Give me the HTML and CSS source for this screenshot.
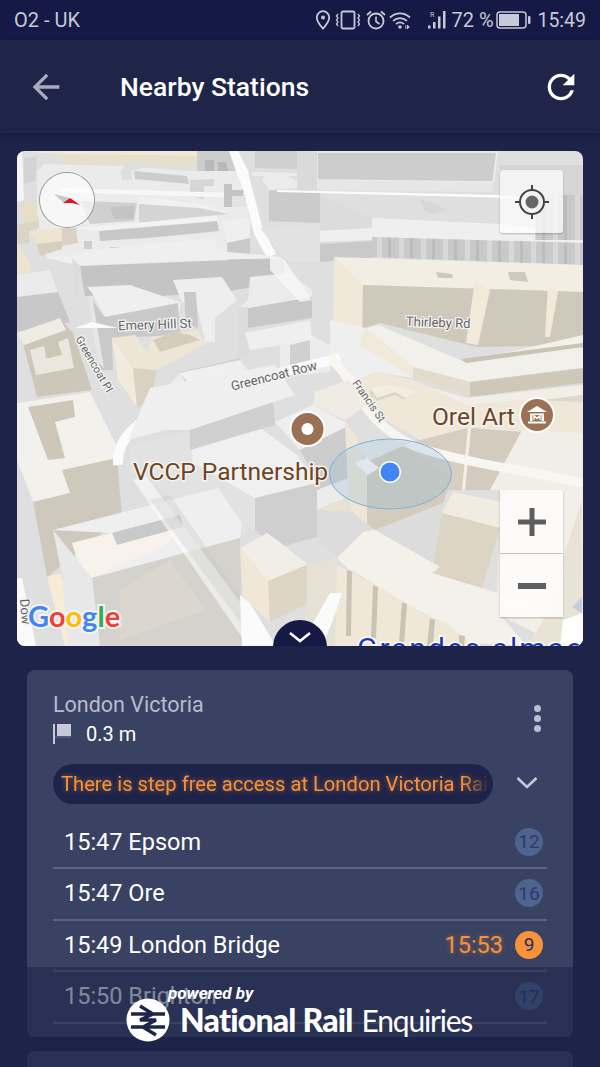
FILE: index.html
```html
<!DOCTYPE html>
<html lang="en">
<head>
    <meta charset="UTF-8">
    <meta name="viewport" content="width=device-width, initial-scale=1.0">
    <title>Nearby Stations</title>
    <link rel="stylesheet" href="styles.css">
</head>
<body>
    <div class="status-bar">
        <span class="carrier">O2 - UK</span>
        <div class="status-icons">
            <svg class="ico-pin" viewBox="0 0 16 20" width="16" height="20"><path d="M8 1.200a6.200 6.200 0 0 0-6.200 6.200C1.800 11.500 8 18.600 8 18.600s6.200-7.100 6.200-11.200A6.200 6.200 0 0 0 8 1.200z" fill="none" stroke="currentColor" stroke-width="1.800"/><circle cx="8" cy="7.400" r="2" fill="currentColor"/></svg>
            <svg class="ico-vibrate" viewBox="0 0 26 20" width="26" height="20"><rect x="6.500" y="1.500" width="13" height="17" rx="1.500" fill="none" stroke="currentColor" stroke-width="1.800"/><path d="M3 4l-1.500 2 1.500 2-1.500 2 1.500 2-1.500 2 1.500 2M23 4l1.500 2-1.500 2 1.500 2-1.500 2 1.500 2-1.500 2" fill="none" stroke="currentColor" stroke-width="1.300"/></svg>
            <svg class="ico-alarm" viewBox="0 0 20 20" width="20" height="20"><circle cx="10" cy="11" r="7.500" fill="none" stroke="currentColor" stroke-width="1.800"/><path d="M10 6.500V11.500L13.500 14" fill="none" stroke="currentColor" stroke-width="1.600"/><path d="M1 5l4-3.500M19 5l-4-3.500" fill="none" stroke="currentColor" stroke-width="1.800"/></svg>
            <svg class="ico-wifi" viewBox="0 0 24 20" width="24" height="20"><path d="M1 7.500c6-5.500 14-5.500 20 0M4 10.800c4.200-3.700 9.800-3.700 14 0M7 14c2.500-2 5.500-2 8 0" fill="none" stroke="currentColor" stroke-width="1.700"/><circle cx="11" cy="17" r="1.800" fill="currentColor"/><path d="M18 15v4l2.500-2zM16.500 15v4" fill="currentColor" stroke="currentColor" stroke-width=".6"/></svg>
            <svg class="ico-signal" viewBox="0 0 20 22" width="20" height="22"><path d="M1 16.500h2.500v3H1zM6 13h2.500v6.500H6zM11 7.500h2.500v12H11zM16 2h2.500v17.500H16z" fill="currentColor"/><text x="3" y="7.500" class="roam">R</text></svg>
            <span class="batt-pct">72 %</span>
            <svg class="ico-batt" viewBox="0 0 35 18" width="35" height="18"><rect x="1" y="1" width="29" height="16" rx="3" fill="none" stroke="currentColor" stroke-width="1.500"/><rect x="3" y="3" width="20" height="12" fill="currentColor"/><rect x="32" y="5" width="2.500" height="8" rx="1" fill="currentColor"/></svg>
            <span class="clock">15:49</span>
        </div>
    </div>

    <header class="app-bar">
        <svg class="back" viewBox="0 0 24 24" width="40" height="40"><path d="M20 11H7.830l5.590-5.590L12 4l-8 8 8 8 1.410-1.410L7.830 13H20v-2z"/></svg>
        <h1 class="title">Nearby Stations</h1>
        <svg class="refresh" viewBox="0 0 24 24" width="40" height="40"><path d="M17.650 6.350A7.958 7.958 0 0 0 12 4c-4.420 0-7.990 3.580-7.990 8s3.570 8 7.990 8c3.730 0 6.840-2.550 7.730-6h-2.080A5.990 5.990 0 0 1 12 18c-3.310 0-6-2.690-6-6s2.690-6 6-6c1.660 0 3.140.69 4.220 1.780L13 11h7V4l-2.350 2.350z"/></svg>
    </header>

    <section class="map">
        <svg class="map-art" viewBox="17 151 566 495" width="566" height="495">
            <defs>
                <pattern id="bars" width="22" height="10" patternUnits="userSpaceOnUse">
                    <rect width="22" height="10" fill="#c9c9c9"/>
                    <rect x="3" width="5" height="10" fill="#d8d8d8"/>
                    <rect x="14" width="3" height="10" fill="#bcbcbc"/>
                </pattern>
            </defs>
            <rect x="17" y="151" width="566" height="495" fill="#dfdfe0"/>

            <!-- top strip -->
            <polygon points="17,151 197,151 197,156 60,154" fill="#f0e8d2"/>
            <polygon points="60,154 197,156 197,168 140,164 89,166 62,163" fill="#e6dfcc"/>
            <polygon points="17,151 22,151 24,200 17,202" fill="#f5f5f5"/>
            <polygon points="24,158 37,156 35,181 24,184" fill="#d4d4d4"/>
            <polygon points="197,151 230,151 237,171 197,171" fill="#cdcdcd"/>
            <polygon points="205,160 214,160 214,171 205,171" fill="#b9b9b9"/>
            <polygon points="218,162 226,162 228,171 218,171" fill="#b9b9b9"/>

            <!-- top left blocks -->
            <polygon points="37,171 44,164 120,166 190,171 237,171 247,194 250,231 240,270 80,266 47,258 37,230" fill="#ebebeb"/>
            <polygon points="120,172 128,161 142,163 142,168 132,171 132,180 122,180" fill="#dedede"/>
            <polygon points="134,171 187,176 189,184 135,179" fill="#cdcdcd"/>
            <polygon points="190,180 214,179 214,186 204,186 204,199 190,196" fill="#d6d6d6"/>
            <polygon points="60,188 238,193 238,198 60,192" fill="#f7f7f7"/>
            <polygon points="80,201 137,203 134,221 90,224" fill="#d0d0d0"/>
            <polygon points="110,207 134,206 134,219 114,219" fill="#c4c4c4"/>
            <polygon points="137,201 142,197 199,204 230,212 215,216 139,204" fill="#f1f1f1"/>
            <polygon points="139,204 199,208 230,214 184,218 139,223" fill="#d4d4d4"/>
            <polygon points="224,184 232,184 232,207 224,207" fill="#c4c4c4"/>
            <polygon points="232,190 246,190 246,207 232,207" fill="#e3e3e3"/>
            <polygon points="232,190 243,190 243,196 232,196" fill="#c4c4c4"/>
            <polygon points="76,228 217,216 219,222 99,231" fill="#f3f3f3"/>
            <polygon points="99,231 217,221 219,231 190,234 147,238 100,241" fill="#c8c8c8"/>
            <polygon points="84,241 92,241 92,249 84,249" fill="#cdcdcd"/>
            <polygon points="110,247 120,247 120,255 110,255" fill="#cdcdcd"/>
            <polygon points="142,248 152,248 152,253 142,253" fill="#cdcdcd"/>
            <polygon points="187,247 196,247 196,250 187,250" fill="#c4c4c4"/>
            <polygon points="222,221 250,218 250,238 228,243" fill="#efefef"/>
            <polygon points="227,243 250,238 250,244 250,262 228,264" fill="#cacaca"/>

            <!-- road top -->
            <polygon points="229,151 238,151 248,171 251,184 262,226 276,254 267,258 254,234 244,191 236,171" fill="#fbfbfb"/>

            <!-- top right gray -->
            <polygon points="255,151 297,151 297,169 255,168" fill="#cfcfcf"/>
            <polygon points="252,172 297,173 297,176 252,176" fill="#ececec"/>
            <polygon points="317,152 497,152 493,182 317,180" fill="#cdcdcd" stroke="#efefef" stroke-width="1.500"/>
            <polygon points="317,180 493,182 493,192 317,190" fill="#e6e6e6"/>
            <polygon points="297,152 317,152 317,190 297,192" fill="#dadada"/>
            <polygon points="262,179 267,174 284,174 297,181 297,188 269,190" fill="#ececec"/>
            <polygon points="269,190 320,193 320,223 269,221" fill="#cbcbcb"/>
            <polygon points="277,192 583,200 583,197 277,190" fill="#fbfbfb"/>
            <polygon points="420,200 432,202 446,210 432,214 426,212" fill="#d7d7d7"/>
            <polygon points="500,165 583,165 583,200 500,196" fill="#d5d5d5"/>
            <polygon points="372,218 500,224 580,232 583,243 372,237" fill="#efefef"/>
            <polygon points="372,237 583,243 583,265 372,257" fill="url(#bars)"/>
            <polygon points="320,196 372,218 372,258 320,258" fill="#dcdcdc"/>
            <polygon points="300,232 372,228 372,240 318,242" fill="#efefef"/>
            <polygon points="310,245 372,241 372,258 318,262" fill="#c9c9c9"/>
            <polygon points="260,228 320,224 320,262 288,262" fill="#e2e2e2"/>
            <polygon points="535,195 583,195 583,240 535,240" fill="url(#bars)"/>

            <!-- left tan -->
            <polygon points="17,204 34,201 39,221 25,223" fill="#e7ddc8"/>
            <polygon points="25,223 39,221 39,228 29,231 29,243 17,244 17,225" fill="#dcd4c2"/>
            <polygon points="29,231 62,228 62,241 37,244" fill="#ede4d2"/>
            <polygon points="37,244 62,241 62,249 40,256" fill="#d7cfbd"/>
            <polygon points="17,244 30,261 32,271 17,275" fill="#ece3d0"/>
            <polygon points="62,228 76,228 78,243 62,246" fill="#d9d2c2"/>
            <polygon points="17,275 50,270 58,292 17,298" fill="#ebebeb"/>
            <polygon points="17,297 58,292 70,322 17,332" fill="#c8c8c8"/>
            <polygon points="17,333 60,318 73,333 92,390 37,397 23,343" fill="#cdc7b9"/>
            <polygon points="17,333 60,318 66,330 24,345" fill="#efece5"/>
            <polygon points="30,350 44,346 48,358 62,355 58,342 68,338 74,368 36,375" fill="#ebe7df"/>
            <polygon points="44,345 50,345 52,358 46,358" fill="#cdc7b9"/>
            <polygon points="17,403 90,392 117,447 122,460 70,493 33,502 17,460" fill="#f3f1ec"/>
            <polygon points="28,407 73,400 75,417 55,422 65,458 48,460 33,420" fill="#cdc7ba"/>
            <polygon points="33,502 70,493 62,470 117,458 122,517 47,577" fill="#cfc9bd"/>
            <polygon points="17,460 33,502 47,577 70,646 34,646 17,580" fill="#dfdfe0"/>
            <polygon points="47,577 60,573 85,646 65,646" fill="#f7ecd5"/>
            <polygon points="17,578 22,578 36,646 17,646" fill="#fafafa"/>

            <!-- long block middle -->
            <polygon points="47,258 72,256 84,251 150,244 214,238 217,251 274,256 284,258 164,261 80,266" fill="#efefef"/>
            <polygon points="80,266 284,258 284,281 225,292 160,296 148,294 85,296" fill="#c4c4c4"/>
            <polygon points="72,258 80,266 80,300 75,296" fill="#dcdcdc"/>
            <polygon points="87,287 130,285 180,302 180,310 105,318 92,293" fill="#efefef"/>
            <polygon points="105,317 178,303 180,335 112,338 113,370 100,370 92,300" fill="#c9c9c9"/>
            <polygon points="88,296 92,296 104,368 98,362" fill="#e6e6e6"/>
            <polygon points="173,280 222,277 237,300 215,318 215,342 205,342 198,310 182,302" fill="#eeeeee"/>
            <polygon points="184,292 196,292 198,328 186,325" fill="#c9c9c9"/>
            <polygon points="250,277 290,273 312,290 312,302 237,310 248,300" fill="#ececec"/>
            <polygon points="237,310 312,297 312,318 248,328 237,332" fill="#c8c8c8"/>
            <polygon points="237,308 248,307 248,360 237,356" fill="#dcdcdc"/>
            <polygon points="270,258 283,258 312,300 300,302 270,270" fill="#f7f7f7" opacity=".8"/>
            <polygon points="75,328 118,328 92,322" fill="#fbfbfb"/>

            <!-- Emery building -->
            <polygon points="112,338 135,335 147,352 153,337 197,330 207,343 157,370 150,403 137,407 133,368" fill="#ede6d6"/>
            <polygon points="112,338 133,368 137,407 118,380" fill="#f1ebdc"/>
            <polygon points="133,368 157,370 150,403 137,407" fill="#d9d2c2"/>
            <polygon points="153,340 175,332 190,335 200,340 160,352" fill="#d5cdbb"/>

            <!-- central low blocks -->
            <polygon points="180,373 240,360 273,403 190,430 160,395" fill="#ececec"/>
            <polygon points="180,372 240,358 240,375 190,392" fill="#d2d2d2"/>
            <polygon points="180,373 240,360 243,372 190,385" fill="#f0f0f0"/>
            <polygon points="190,430 273,403 273,422 210,442 190,445" fill="#d2d2d2"/>
            <polygon points="280,345 310,335 330,345 330,372 305,375 280,372" fill="#ececec"/>
            <polygon points="290,345 310,340 310,362 290,365" fill="#d0d0d0"/>
            <polygon points="245,333 310,320 312,340 250,350" fill="#efefef"/>

            <!-- right tan mega block -->
            <polygon points="334,257 583,265 583,292 363,285" fill="#f2eee4"/>
            <polygon points="334,257 363,285 362,360 333,320" fill="#f0e8d8"/>
            <polygon points="363,285 583,292 583,345 477,347 380,323 365,328 362,360" fill="#cfc9bb"/>
            <polygon points="475,280 490,290 478,345 466,343" fill="#f1ead9"/>
            <polygon points="548,285 558,292 550,337 545,337" fill="#f1ead9"/>
            <polygon points="436,272 452,274 453,278 438,278" fill="#cfc9bb"/>
            <polygon points="508,272 525,272 528,282 510,280" fill="#cfc9bb"/>

            <polygon points="330,320 365,328 413,378 375,372 345,385 330,357" fill="#efefef"/>
            <polygon points="378,325 465,362 583,335 583,368 470,382 413,367 365,328" fill="#f2f0eb"/>
            <polygon points="461,359 583,343 583,347 466,363" fill="#c9c3b4"/>
            <polygon points="365,328 413,367 413,377 360,345" fill="#f1e9da"/>
            <polygon points="413,367 470,382 470,397 413,377" fill="#e2dccf"/>
            <polygon points="470,382 583,368 583,383 470,397" fill="#cec8b9"/>
            <polygon points="405,380 467,398 583,385 583,395 467,410 410,392" fill="#f1eee7"/>
            <polygon points="467,410 583,395 583,402 470,416" fill="#ded8ca"/>
            <polygon points="375,372 413,380 467,405 520,400 583,402 583,435 468,428 420,440 385,420 345,385" fill="#efe8d9"/>
            <polygon points="522,430 583,433 583,490 487,490" fill="#f1eee7"/>
            <polygon points="370,388 393,385 415,392 405,398 395,392 377,398" fill="#f3eee2"/>
            <polygon points="370,388 377,398 377,401 370,395" fill="#ddd6c6"/>
            <polygon points="377,398 395,392 395,395 377,401" fill="#ddd6c6"/>
            <polygon points="395,392 405,398 405,400 395,395" fill="#ddd6c6"/>

            <!-- dark tan walls right of the dot -->
            <polygon points="412,442 468,428 462,490 400,490 375,470" fill="#d6cfc1"/>
            <polygon points="471,428 520,432 522,430 490,490 465,490" fill="#d3ccbe"/>
            <polygon points="468,428 471,428 465,490 462,490" fill="#f5efe3"/>

            <!-- curved road -->
            <path d="M118 465C116 430 150 410 230 387S300 368 340 358" fill="none" stroke="#fbfbfb" stroke-width="10"/>
            <path d="M330 357L350 380C360 400 370 415 380 423C395 436 410 445 420 448C450 458 480 463 500 467C530 472 560 478 583 483" fill="none" stroke="#f8f6f1" stroke-width="9"/>

            <!-- VCCP block -->
            <polygon points="150,388 275,365 295,395 190,430 165,430 128,440" fill="#efefef"/>
            <polygon points="130,445 190,432 193,463 255,498 255,528 240,538 130,472" fill="#e2e2e3"/>
            <polygon points="190,432 243,415 297,455 317,483 255,498 193,463" fill="#f0f0f0"/>
            <polygon points="255,498 317,483 317,537 277,548 255,530" fill="#cfcfcf"/>
            <polygon points="273,402 275,425 190,450 190,430" fill="#d0d0d0"/>
            <polygon points="275,422 313,405 350,425 300,450" fill="#efefef"/>
            <polygon points="300,450 350,425 348,497 317,510 317,480" fill="#cdcdcd"/>
            <polygon points="317,490 348,478 348,497 317,510" fill="#ececec"/>
            <polygon points="315,392 348,380 372,402 345,420 313,405" fill="#f0ece3"/>

            <!-- block under the dot -->
            <polygon points="345,420 358,440 367,475 367,528 352,512 348,497" fill="#efe6d6"/>
            <polygon points="367,460 400,445 452,477 443,503 377,530 367,528" fill="#d3ccbd"/>
            <polygon points="358,445 380,440 412,442 367,462" fill="#e9e9e7"/>
            <polygon points="317,510 348,497 352,520 367,530 345,540 320,540" fill="#e9e1d1"/>
            <polygon points="352,512 375,530 345,552 337,558 317,537 317,510" fill="#dcdcdd"/>
            <polygon points="375,530 443,503 442,513 432,573" fill="#dcdcdd"/>

            <!-- U block -->
            <polygon points="53,530 218,488 242,523 240,538 92,578 80,567 72,543 112,533 117,545 183,527 180,515 112,533" fill="#efefef"/>
            <polygon points="112,533 180,515 183,527 117,545" fill="#c9c9c9"/>
            <polygon points="72,543 112,533 117,545 183,527 165,545 92,578 80,567" fill="#f7f3ec"/>
            <polygon points="92,578 240,538 242,646 100,646" fill="#d4d2cd"/>
            <polygon points="53,530 92,578 100,646 68,646 62,575" fill="#e8e8e8"/>
            <polygon points="120,590 170,560 205,610 120,640" fill="#dbd7cf"/>
            <polygon points="133,480 146,476 273,646 248,646" fill="#ffffff" opacity=".55"/>
            <polygon points="150,500 170,495 243,600 242,625" fill="#c9c9c9" opacity=".35"/>
            <polygon points="240,595 250,603 276,646 242,646" fill="#fbfbfb"/>

            <!-- small tan block -->
            <polygon points="240,548 267,533 277,540 305,562 307,565 268,581" fill="#f1eee8"/>
            <polygon points="240,548 268,581 270,622 243,597" fill="#f0e7d6"/>
            <polygon points="268,581 307,565 307,604 270,622" fill="#ddd6c5"/>
            <polygon points="307,565 337,558 337,646 300,646 307,604" fill="#e6e1d5"/>

            <!-- bottom tan block -->
            <polygon points="453,492 507,503 500,528 442,513" fill="#f1ece1"/>
            <polygon points="442,513 500,528 482,588 432,573" fill="#dcd5c4"/>
            <polygon points="507,490 583,490 583,646 560,646 500,615 497,593 500,528" fill="#f2efe9"/>
            <polygon points="582,500 583,646 527,646 552,607 563,557" fill="#e9e3d6"/>
            <polygon points="563,620 583,613 583,646 560,646" fill="#fff"/>
            <polygon points="572,607 582,597 582,613" fill="#c7cbdc"/>
            <polygon points="337,558 345,550 363,532 375,530 440,567 432,573 497,593 552,607 500,615 527,646 470,643 445,623 417,610 390,595 373,583 347,568" fill="#f4f1eb"/>
            <polygon points="337,565 373,583 417,610 445,623 475,646 335,646" fill="#efe8d9"/>
            <polygon points="347,570 352,572 351,636 346,636" fill="#c9c3b4"/>
            <polygon points="373,585 378,587 376,638 371,638" fill="#c9c3b4"/>
            <polygon points="402,602 407,604 404,644 399,644" fill="#c9c3b4"/>
            <polygon points="430,618 435,620 433,646 427,646" fill="#c9c3b4"/>
            <polygon points="459,635 465,636 464,646 459,646" fill="#c9c3b4"/>
            <polygon points="330,593 342,593 333,620 322,646 300,646" fill="#fbfbfb"/>

            <!-- location accuracy -->
            <ellipse cx="390.500" cy="474" rx="61" ry="35" fill="#8fb7d8" fill-opacity=".28" stroke="#79b1de" stroke-width="1"/>
            <polygon points="355,463 367,458 379,468 368,475" fill="#dfe8ee"/>

            <!-- labels -->
            <text class="road-label" transform="translate(155 329) rotate(-2)">Emery Hill St</text>
            <text class="road-label" transform="translate(275 380) rotate(-14)">Greencoat Row</text>
            <text class="road-label small" transform="translate(91 366) rotate(60)">Greencoat Pl</text>
            <text class="road-label small" transform="translate(366 403) rotate(55)">Francis St</text>
            <text class="road-label" transform="translate(438 327) rotate(2)">Thirleby Rd</text>
            <text class="road-label" transform="translate(21 612) rotate(85)">Dow</text>

            <text class="poi-label" x="133" y="480">VCCP Partnership</text>
            <text class="poi-label" x="432" y="425">Orel Art</text>
            <text class="store-label" x="357" y="659">Grandes almacenes</text>

            <circle cx="307.500" cy="429" r="18" fill="#fff"/>
            <circle cx="307.500" cy="429" r="16" fill="#9a7253"/>
            <circle cx="307.500" cy="429" r="6" fill="#fff"/>

            <circle cx="537" cy="415" r="18" fill="#fff"/>
            <circle cx="537" cy="415" r="16" fill="#9a7253"/>
            <path d="M527 412l10-6 10 6zM530 413.500h14v1.500h-14zM530 415h2.500v6H530zM541.500 415h2.500v6h-2.500zM528 421.500h18v2h-18z" fill="#fff"/>
            <path d="M534 420v-4.500l3 3 3-3v4.500" fill="none" stroke="#fff" stroke-width="1.300"/>

            <circle cx="390" cy="472" r="11" fill="#fff"/>
            <circle cx="390" cy="472" r="9.500" fill="#4285f4"/>

            <text class="google" y="627" x="28"><tspan fill="#4285f4">G</tspan><tspan fill="#ea4335">o</tspan><tspan fill="#fbbc05">o</tspan><tspan fill="#4285f4">g</tspan><tspan fill="#34a853">l</tspan><tspan fill="#ea4335">e</tspan></text>
        </svg>

        <div class="compass">
            <svg viewBox="0 0 54 54" width="54" height="54"><polygon points="14,21 30,25 24,30" fill="#c9c9c9"/><polygon points="23,30 30,25 40,32 32,30" fill="#e0141c"/></svg>
        </div>
        <button class="map-btn locate">
            <svg viewBox="0 0 36 36" width="36" height="36"><circle cx="18" cy="18" r="12" fill="none" stroke="#444" stroke-width="2"/><circle cx="18" cy="18" r="6.500" fill="#666"/><path d="M18 1v6M18 29v6M1 18h6M29 18h6" stroke="#444" stroke-width="2"/></svg>
        </button>
        <div class="zoom-ctl">
            <button class="map-btn zoom-btn"><svg viewBox="0 0 30 30" width="30" height="30"><path d="M12.500 1h5v11.500H29v5H17.500V29h-5V17.500H1v-5h11.500z" fill="#5e5e5e"/></svg></button>
            <button class="map-btn zoom-btn"><svg viewBox="0 0 30 30" width="30" height="30"><path d="M1 12h28v6H1z" fill="#5e5e5e"/></svg></button>
        </div>
        <div class="collapse">
            <svg viewBox="0 0 24 12" width="24" height="12"><path d="M2 2l10 8 10-8" fill="none" stroke="#fff" stroke-width="2.600"/></svg>
        </div>
    </section>

    <section class="card">
        <div class="station-head">
            <div>
                <div class="station-name">London Victoria</div>
                <div class="distance">
                    <svg viewBox="0 0 18 20" width="18" height="20"><rect x="0" y="0" width="2" height="20" fill="#c5c9d9"/><rect x="4" y="0" width="14" height="12" fill="#c5c9d9"/><rect x="2" y="12" width="16" height="2" fill="#525a7c"/></svg>
                    <span>0.3 m</span>
                </div>
            </div>
            <div class="kebab"><i></i><i></i><i></i></div>
        </div>
        <div class="notice-row">
            <div class="notice"><span>There is step free access at London Victoria Rail</span></div>
            <svg class="notice-more" viewBox="0 0 22 13" width="22" height="13"><path d="M1.500 2l9.500 9 9.500-9" fill="none" stroke="#c5c9d9" stroke-width="2.600"/></svg>
        </div>
        <ul class="departures">
            <li class="dep"><span class="dep-name">15:47 Epsom</span><b class="plat">12</b></li>
            <li class="dep"><span class="dep-name">15:47 Ore</span><b class="plat">16</b></li>
            <li class="dep"><span class="dep-name">15:49 London Bridge</span><span class="late">15:53</span><b class="plat plat-late">9</b></li>
            <li class="dep"><span class="dep-name">15:50 Brighton</span><b class="plat">17</b></li>
        </ul>
    </section>
    <section class="card card-next"></section>

    <footer class="powered">
        <span class="powered-by">powered by</span>
        <div class="nre">
            <svg class="nre-logo" viewBox="0 0 44 44" width="44" height="44"><circle cx="22" cy="22" r="21.500" fill="#fff"/><path d="M5 16h34M5 29h34M14 8l13 8-13 6h16l-13 7 13 8" fill="none" stroke="#1e2449" stroke-width="3.400"/></svg>
            <span class="nre-bold">National Rail</span>
            <span class="nre-light">Enquiries</span>
        </div>
    </footer>
</body>
</html>
```

FILE: styles.css
```css
* {
    box-sizing: border-box;
}

body {
    margin: 0;
    width: 600px;
    height: 1067px;
    overflow: hidden;
    position: relative;
    background-color: #1e2449;
    font-family: 'Roboto', sans-serif;
    color: #fff;
}

.status-bar {
    height: 40px;
    background: #141a45;
    color: #c6c9d8;
    font-size: 20px;
    display: flex;
    align-items: center;
    justify-content: space-between;
    padding: 0 14px;
}

.status-icons {
    display: flex;
    align-items: center;
}

.status-icons svg {
    display: block;
}

.ico-pin {
    margin-right: 4px;
}

.ico-vibrate {
    margin-right: 5px;
}

.ico-alarm {
    margin-right: 3px;
}

.ico-wifi {
    margin-right: 14px;
}

.ico-signal {
    margin-right: 4px;
}

.roam {
    font-size: 7px;
    fill: currentColor;
}

.batt-pct {
    width: 40px;
    margin-right: 5px;
    white-space: nowrap;
}

.ico-batt {
    margin-right: 6px;
}

.clock {
    font-size: 19.500px;
}

.app-bar {
    height: 93px;
    background: #1e2549;
    display: flex;
    align-items: center;
    padding: 0 6px 0 26px;
    box-shadow: 0 2px 6px rgba(0, 0, 0, 0.25);
}

.back {
    fill: #a8acbf;
}

.title {
    margin: 0 0 0 54px;
    flex: 1;
    font-size: 26.500px;
    font-weight: 500;
}

.refresh {
    fill: #fff;
    margin-right: 13px;
}

.map {
    position: relative;
    height: 495px;
    margin: 18px 17px 0;
    border-radius: 8px;
    overflow: hidden;
}

.map-art {
    display: block;
}

.road-label {
    font-size: 13px;
    fill: #656565;
    text-anchor: middle;
    stroke: #f4f4f4;
    stroke-width: 2.500px;
    paint-order: stroke;
}

.road-label.small {
    font-size: 11px;
}

.poi-label {
    font-size: 24.500px;
    fill: #6b4526;
    stroke: #f6f3ee;
    stroke-width: 3px;
    paint-order: stroke;
}

.store-label {
    font-size: 30px;
    letter-spacing: 2px;
    fill: #1c36b4;
    stroke: #fff;
    stroke-width: 3px;
    paint-order: stroke;
}

.google {
    font-family: 'Lato', sans-serif;
    font-size: 29px;
    font-weight: 700;
    stroke: #f4f4f0;
    stroke-width: 4px;
    paint-order: stroke;
}

.compass {
    position: absolute;
    left: 23px;
    top: 22px;
    width: 54px;
    height: 54px;
    border-radius: 50%;
    background: rgba(255, 255, 255, 0.62);
    box-shadow: 0 0 0 1px #9a9a9a;
}

.compass svg {
    display: block;
}

.map-btn {
    display: flex;
    align-items: center;
    justify-content: center;
    width: 63px;
    padding: 0;
    border: none;
    border-radius: 3px;
    background: rgba(255, 255, 255, 0.72);
    box-shadow: 0 1px 2px rgba(0, 0, 0, 0.25);
}

.locate {
    position: absolute;
    left: 483px;
    top: 19px;
    height: 63px;
}

.zoom-ctl {
    position: absolute;
    left: 483px;
    top: 339px;
    display: flex;
    flex-direction: column;
}

.zoom-btn {
    height: 63px;
    border-radius: 0;
    background: rgba(254, 253, 250, 0.88);
}

.zoom-btn + .zoom-btn {
    margin-top: 1px;
}

.collapse {
    position: absolute;
    left: 256px;
    top: 469px;
    width: 54px;
    height: 54px;
    border-radius: 50%;
    background: #141a45;
    display: flex;
    justify-content: center;
    padding-top: 11px;
}

.card {
    height: 367px;
    margin: 24px 27px 0;
    padding: 21px 26px 0;
    background: #394263;
    border-radius: 8px;
}

.card-next {
    height: 16px;
    margin-top: 14px;
    padding: 0;
    border-radius: 8px 8px 0 0;
}

.station-head {
    display: flex;
    justify-content: space-between;
    align-items: center;
}

.station-name {
    font-size: 21.500px;
    color: #b7bbce;
    line-height: 28px;
}

.distance {
    display: flex;
    align-items: center;
    gap: 15px;
    margin-top: 3px;
    font-size: 20px;
    line-height: 24px;
}

.kebab {
    display: flex;
    flex-direction: column;
    gap: 3px;
    margin-right: 6px;
}

.kebab i {
    display: block;
    width: 7px;
    height: 7px;
    border-radius: 50%;
    background: #b9bdcf;
}

.notice-row {
    display: flex;
    align-items: center;
    margin-top: 18px;
}

.notice {
    width: 440px;
    height: 40px;
    border-radius: 20px;
    background: #1e2449;
    padding: 0 4px 0 8px;
    display: flex;
    align-items: center;
    overflow: hidden;
    white-space: nowrap;
}

.notice span {
    display: block;
    width: 100%;
    font-size: 20.200px;
    color: #f7923a;
    text-shadow: 0 0 5px rgba(247, 146, 58, 0.55);
    overflow: hidden;
    -webkit-mask-image: linear-gradient(90deg, #000 94%, transparent);
    mask-image: linear-gradient(90deg, #000 94%, transparent);
}

.notice-more {
    margin-left: 23px;
    margin-top: -4px;
}

.departures {
    list-style: none;
    margin: 13.500px 0 0;
    padding: 0;
}

.dep {
    display: flex;
    align-items: center;
    height: 51.500px;
    padding: 0 4px 1px 11px;
    border-bottom: 2px solid #5b6486;
    font-size: 23.500px;
}

.dep-name {
    flex: 1;
}

.late {
    color: #f7923a;
    text-shadow: 0 0 5px rgba(247, 146, 58, 0.5);
    margin-right: 12px;
}

.plat {
    width: 28px;
    height: 28px;
    border-radius: 50%;
    background: #4d648f;
    color: #2c3b6b;
    font-size: 19px;
    font-weight: 400;
    display: flex;
    align-items: center;
    justify-content: center;
}

.plat-late {
    background: #f7923a;
    color: #1f2d66;
}

.powered {
    position: absolute;
    left: 0;
    right: 0;
    top: 967px;
    bottom: 0;
    background: rgba(30, 36, 73, 0.55);
}

.powered-by {
    position: absolute;
    left: 168px;
    top: 16px;
    font-size: 17px;
    font-weight: 700;
    font-style: italic;
}

.nre {
    position: absolute;
    left: 126px;
    top: 31px;
    display: flex;
    align-items: center;
    gap: 10px;
    font-family: 'Lato', sans-serif;
    line-height: 44px;
    white-space: nowrap;
}

.nre-logo {
    display: block;
}

.nre-bold {
    font-size: 32px;
    font-weight: 900;
    letter-spacing: -0.800px;
}

.nre-light {
    font-size: 30px;
    font-weight: 400;
    letter-spacing: -1.200px;
    margin-left: -1px;
}
```
